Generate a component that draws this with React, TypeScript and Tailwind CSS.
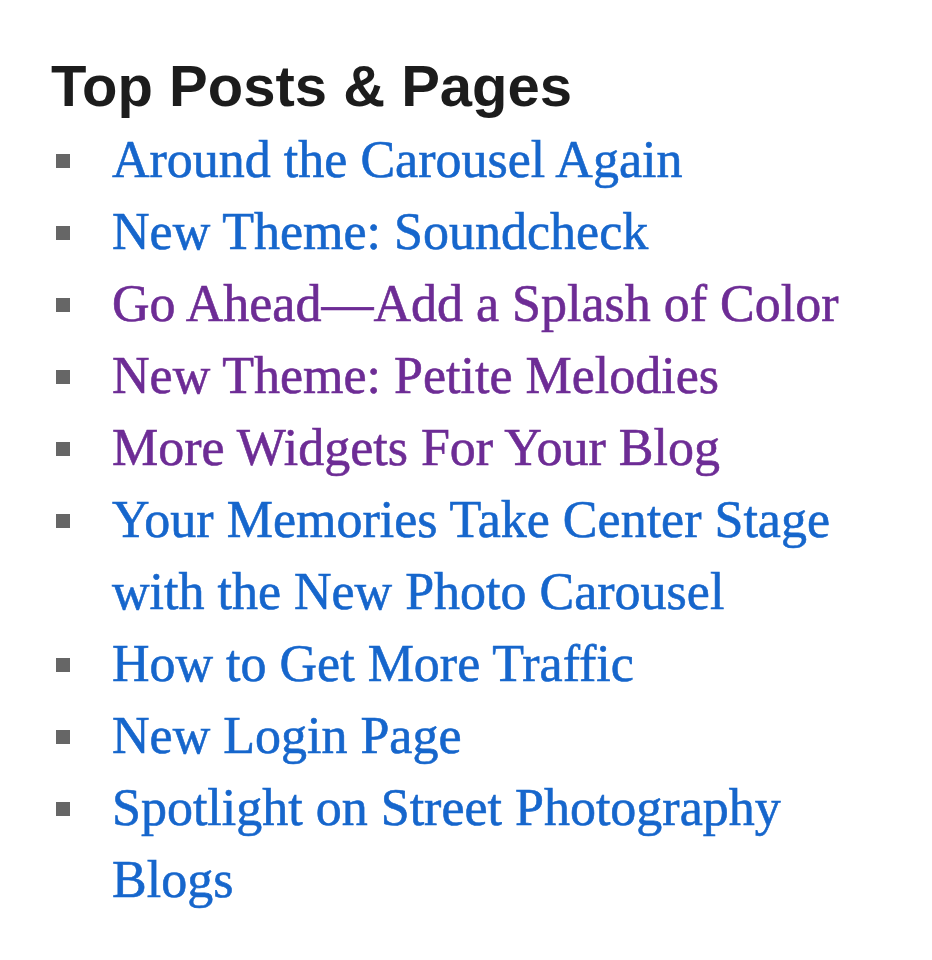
const posts = [
  { title: 'Around the Carousel Again', visited: false },
  { title: 'New Theme: Soundcheck', visited: false },
  { title: 'Go Ahead\u2014Add a Splash of Color', visited: true },
  { title: 'New Theme: Petite Melodies', visited: true },
  { title: 'More Widgets For Your Blog', visited: true },
  { title: 'Your Memories Take Center Stage with the New Photo Carousel', visited: false },
  { title: 'How to Get More Traffic', visited: false },
  { title: 'New Login Page', visited: false },
  { title: 'Spotlight on Street Photography Blogs', visited: false },
]

export default function App() {
  return (
    <div className="min-h-screen w-[932px] bg-white pl-[51px] pt-[54px]">
      <h2
        className="text-[58px] font-bold leading-[64px] text-[#1c1c1c] mb-[6px]"
        style={{ fontFamily: '"Liberation Sans", Arial, sans-serif' }}
      >
        Top Posts &amp; Pages
      </h2>
      <ul className="w-[795px]">
        {posts.map(p => (
          <li key={p.title} className="flex items-start">
            <span className="w-[61px] shrink-0 flex">
              <span className="ml-[5px] mt-[30px] w-[14px] h-[14px] bg-[#666666]" />
            </span>
            <a
              href="#"
              className={`text-[52px] leading-[72px] [-webkit-text-stroke:0.6px_currentColor] ${p.visited ? 'text-[#6d2c95]' : 'text-[#1666cc]'}`}
              style={{ fontFamily: '"Liberation Serif", "Times New Roman", serif' }}
            >
              {p.title}
            </a>
          </li>
        ))}
      </ul>
    </div>
  )
}
